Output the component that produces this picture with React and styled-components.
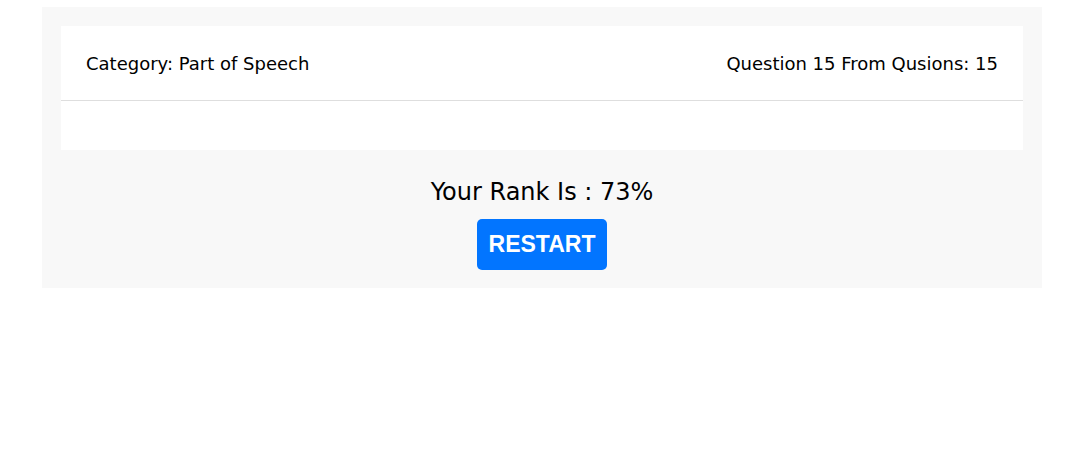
import styled, { createGlobalStyle } from "styled-components";

const GlobalStyle = createGlobalStyle`
  body {
    margin: 0;
    background: #fff;
    font-family: "DejaVu Sans", sans-serif;
    color: #000;
  }
`;

const Page = styled.div`
  padding: 7px 0 0 42px;
`;

const Quiz = styled.section`
  width: 1000px;
  box-sizing: border-box;
  padding: 19px 19px 18px;
  background: #f8f8f8;
  display: flex;
  flex-direction: column;
  align-items: center;
`;

const Card = styled.div`
  align-self: stretch;
  background: #fff;
`;

const CardHeader = styled.header`
  height: 74px;
  padding: 0 25px;
  display: flex;
  align-items: center;
  justify-content: space-between;
  border-bottom: 1px solid #dedede;
  font-size: 18px;
`;

const CardBody = styled.div`
  height: 49px;
`;

const Rank = styled.h2`
  margin: 27px 0 12px;
  font-size: 24px;
  font-weight: normal;
  line-height: 30px;
`;

const RestartButton = styled.button`
  width: 130px;
  height: 51px;
  border: none;
  border-radius: 5px;
  background: #0275ff;
  color: #fff;
  font-family: "Liberation Sans", Arial, sans-serif;
  font-weight: bold;
  font-size: 23px;
  cursor: pointer;
`;

const App = () => (
  <>
    <GlobalStyle />
    <Page>
      <Quiz>
        <Card>
          <CardHeader>
            <span>Category: Part of Speech</span>
            <span>Question 15 From Qusions: 15</span>
          </CardHeader>
          <CardBody />
        </Card>
        <Rank>Your Rank Is : 73%</Rank>
        <RestartButton>RESTART</RestartButton>
      </Quiz>
    </Page>
  </>
);

export default App;
